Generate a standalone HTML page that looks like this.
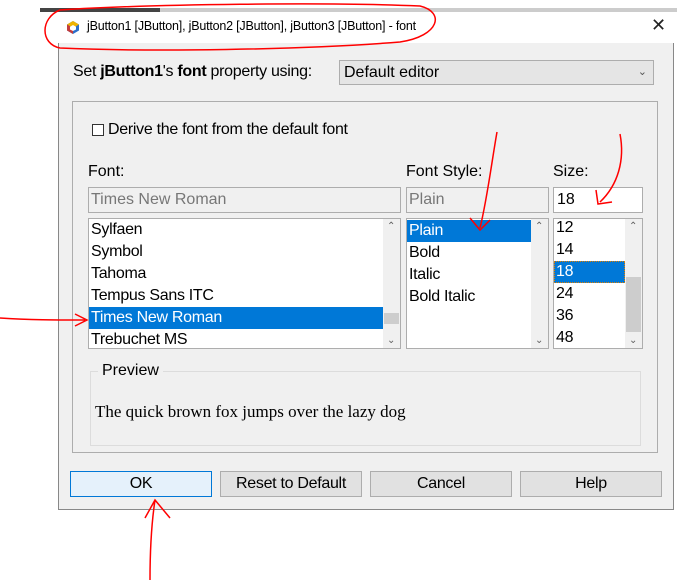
<!DOCTYPE html>
<html><head><meta charset="utf-8"><style>
*{margin:0;padding:0;box-sizing:border-box}
body{width:677px;height:583px;background:#fff;position:relative;overflow:hidden;font-family:"Liberation Sans",sans-serif;color:#000;font-size:15px}
.a{position:absolute}
.dlg{left:58px;top:12px;width:616px;height:498px;border:1px solid #888;background:#f0f0f0;border-top:none}
.tb{left:58px;top:12px;width:616px;height:31px;background:#fff}
.box{border:1px solid #adadad;background:#fff}
.row{position:absolute;left:2px;height:22px;line-height:22px;padding-left:0;font-size:16px;letter-spacing:-0.3px}
.sel{background:#0078d7;color:#fff}
.sb{position:absolute;top:0;right:0;width:17px;height:100%;background:#f0f0f0}
.btn{position:absolute;top:471px;height:26px;width:142px;background:#e1e1e1;border:1px solid #adadad;text-align:center;line-height:24px;font-size:16px;letter-spacing:-0.3px}
.ar{font-size:10px;color:#606060;position:absolute;left:4px}
</style></head><body>
<div class="a" style="left:40px;top:8px;width:637px;height:4px;background:#ccc"></div>
<div class="a" style="left:40px;top:8px;width:120px;height:4px;background:#444"></div>
<div class="a dlg"></div>
<div class="a tb"></div>
<svg class="a" style="left:66px;top:20px" width="14" height="15" viewBox="0 0 14 15"><path d="M7 1L13 4.5V10.5L7 14L1 10.5V4.5Z" fill="#2b6fcb"/><path d="M7 1L13 4.5L7 8L1 4.5Z" fill="#f0b400"/><path d="M1 4.5L7 8V14L1 10.5Z" fill="#c43c3c"/><path d="M7 5L10 6.8V9.5L7 11L4 9.5V6.8Z" fill="#fff"/></svg>
<div class="a" style="left:87px;top:19px;font-size:12.5px;letter-spacing:-0.2px">jButton1 [JButton], jButton2 [JButton], jButton3 [JButton] - font</div>
<div class="a" style="left:651px;top:15px;font-size:18px;color:#222">✕</div>
<div class="a" style="left:73px;top:63px;font-size:16px;letter-spacing:-0.3px">Set <b>jButton1</b>'s <b>font</b> property using:</div>
<div class="a" style="left:339px;top:60px;width:315px;height:25px;background:#e5e5e5;border:1px solid #adadad;font-size:16px;line-height:23px;padding-left:4px">Default editor<span style="position:absolute;right:6px;top:0;font-size:11px;color:#555">&#8964;</span></div>
<div class="a" style="left:72px;top:101px;width:586px;height:352px;border:1px solid #adadad"></div>
<div class="a" style="left:92px;top:124px;width:12px;height:12px;border:1px solid #333;background:#fff"></div>
<div class="a" style="left:108px;top:121px;font-size:16px;letter-spacing:-0.3px">Derive the font from the default font</div>
<div class="a" style="left:88px;top:163px;font-size:16px">Font:</div>
<div class="a" style="left:406px;top:163px;font-size:16px">Font Style:</div>
<div class="a" style="left:553px;top:163px;font-size:16px">Size:</div>
<div class="a" style="left:88px;top:187px;width:313px;height:26px;border:1px solid #adadad;color:#777;font-size:16px;line-height:24px;padding-left:2px">Times New Roman</div>
<div class="a" style="left:406px;top:187px;width:143px;height:26px;border:1px solid #adadad;color:#777;font-size:16px;line-height:24px;padding-left:2px">Plain</div>
<div class="a" style="left:553px;top:187px;width:90px;height:26px;border:1px solid #adadad;background:#fff;font-size:16px;line-height:24px;padding-left:3px">18</div>
<div class="a box" style="left:88px;top:218px;width:313px;height:131px;overflow:hidden">
<div class="row" style="top:0">Sylfaen</div><div class="row" style="top:22px">Symbol</div><div class="row" style="top:44px">Tahoma</div><div class="row" style="top:66px">Tempus Sans ITC</div><div class="row sel" style="top:88px;left:0;width:295px;padding-left:2px">Times New Roman</div><div class="row" style="top:110px">Trebuchet MS</div>
<div class="sb"><span class="ar" style="top:2px">&#8963;</span><div style="position:absolute;left:1px;top:94px;width:15px;height:11px;background:#cdcdcd"></div><span class="ar" style="bottom:2px">&#8964;</span></div></div>
<div class="a box" style="left:406px;top:218px;width:143px;height:131px;overflow:hidden">
<div class="row sel" style="top:1px;left:0;width:124px;padding-left:2px">Plain</div><div class="row" style="top:23px">Bold</div><div class="row" style="top:45px">Italic</div><div class="row" style="top:67px">Bold Italic</div>
<div class="sb"><span class="ar" style="top:2px">&#8963;</span><span class="ar" style="bottom:2px">&#8964;</span></div></div>
<div class="a box" style="left:553px;top:218px;width:90px;height:131px;overflow:hidden">
<div class="row" style="top:-2px">12</div><div class="row" style="top:20px">14</div><div class="row sel" style="top:42px;left:0;width:71px;padding-left:2px;outline:1px dotted #e08000;outline-offset:-1px">18</div><div class="row" style="top:64px">24</div><div class="row" style="top:86px">36</div><div class="row" style="top:108px">48</div>
<div class="sb"><span class="ar" style="top:2px">&#8963;</span><div style="position:absolute;left:1px;top:58px;width:15px;height:55px;background:#cdcdcd"></div><span class="ar" style="bottom:2px">&#8964;</span></div></div>
<div class="a" style="left:90px;top:371px;width:551px;height:75px;border:1px solid #dcdcdc"></div>
<div class="a" style="left:98px;top:362px;padding:0 4px;background:#f0f0f0;font-size:16px">Preview</div>
<div class="a" style="left:95px;top:402px;font-family:'Liberation Serif',serif;font-size:17px">The quick brown fox jumps over the lazy dog</div>
<div class="btn" style="left:70px;background:#e5f1fb;border-color:#0078d7">OK</div>
<div class="btn" style="left:220px">Reset to Default</div>
<div class="btn" style="left:370px">Cancel</div>
<div class="btn" style="left:520px">Help</div>
<svg class="a" style="left:0;top:0" width="677" height="583" fill="none" stroke="#f00" stroke-width="1.5">
<path d="M60 10C150 4 330 2 420 6C445 12 440 36 400 42C300 50 150 52 60 48C40 44 40 18 60 10Z"/>
<path d="M497 132C492 160 487 200 480 228M470 218L480 230L490 220"/>
<path d="M620 134C625 160 618 185 600 202M596 190L598 204L612 202"/>
<path d="M0 318C30 320 55 320 85 320M75 314L87 320L75 326"/>
<path d="M150 580C150 550 152 520 155 500M145 518L155 500L170 518"/>
</svg>
</body></html>
